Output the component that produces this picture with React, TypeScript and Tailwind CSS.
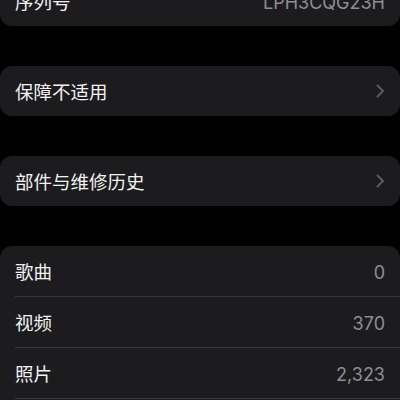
import React from 'react';

type Row = { label: string; value?: string; chevron?: boolean };

const groups: Row[][] = [
  [{ label: '序列号', value: 'LPH3CQG23H' }],
  [{ label: '保障不适用', chevron: true }],
  [{ label: '部件与维修历史', chevron: true }],
  [
    { label: '歌曲', value: '0' },
    { label: '视频', value: '370' },
    { label: '照片', value: '2,323' },
    { label: '', value: '' },
  ],
];

const Chevron: React.FC = () => (
  <svg width="9" height="14" viewBox="0 0 9 14" fill="none">
    <path d="M1.5 1.5L7 7L1.5 12.5" stroke="#5c5c60" strokeWidth="2" strokeLinecap="round" strokeLinejoin="round" />
  </svg>
);

const App: React.FC = () => {
  return (
    <div
      className="w-[400px] h-[400px] overflow-hidden bg-black"
      style={{ fontFamily: '"Inter", "Noto Sans CJK SC", sans-serif' }}
    >
      <div className="flex flex-col gap-[40px] mt-[-24px]">
        {groups.map((rows, gi) => (
          <div key={gi} className="bg-[#1c1c1e] rounded-[12px] overflow-hidden">
            {rows.map((row, ri) => (
              <div key={ri} className="pl-[15px]">
                {ri > 0 && <div className="h-px bg-[#38383a]" />}
                <div className="h-[50px] flex items-center justify-between pr-[15px]">
                  <span className="text-[18.5px] text-[#f2f2f2] pt-[3px]">{row.label}</span>
                  {row.chevron ? (
                    <Chevron />
                  ) : (
                    <span className="text-[18px] text-[#8e8e93] pt-[3px]">{row.value}</span>
                  )}
                </div>
              </div>
            ))}
          </div>
        ))}
      </div>
    </div>
  );
};

export default App;
